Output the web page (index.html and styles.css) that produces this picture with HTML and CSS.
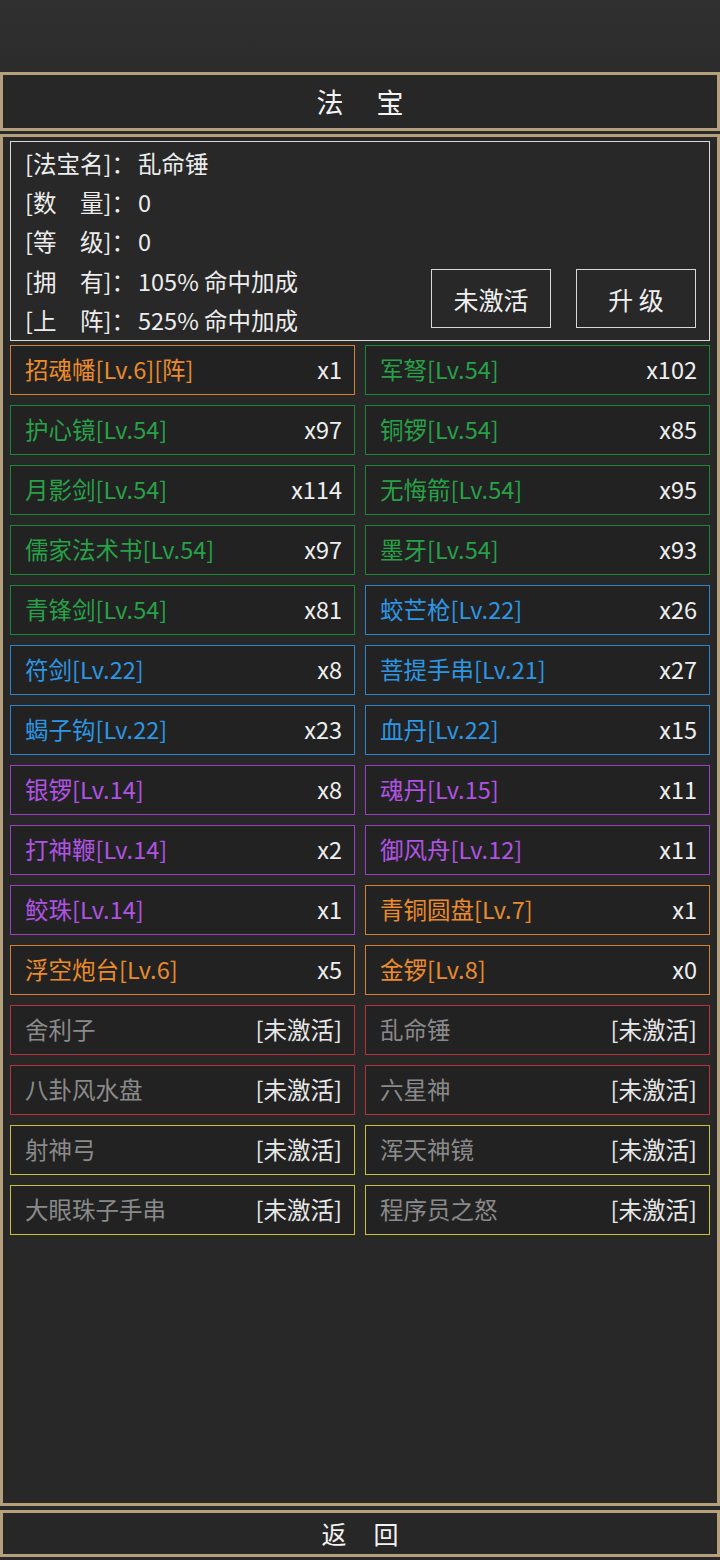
FILE: index.html
```html
<!DOCTYPE html>
<html lang="zh">
<head>
<meta charset="utf-8">
<title>法宝</title>
<link rel="stylesheet" href="styles.css">
</head>
<body>
<div class="screen">
  <div class="topbar"></div>
  <div class="header"><span class="title">法宝</span></div>
  <div class="panel">
    <div class="info">
      <div class="lines">
        <div class="line"><span class="key">[法宝名]：</span>乱命锤</div>
        <div class="line"><span class="key">[数　量]：</span>0</div>
        <div class="line"><span class="key">[等　级]：</span>0</div>
        <div class="line"><span class="key">[拥　有]：</span>105% 命中加成</div>
        <div class="line"><span class="key">[上　阵]：</span>525% 命中加成</div>
      </div>
      <div class="actions">
        <div class="btn">未激活</div>
        <div class="btn">升 级</div>
      </div>
    </div>
    <div class="grid">
      <div class="item orange"><span class="name">招魂幡[Lv.6][阵]</span><span class="count">x1</span></div>
      <div class="item green"><span class="name">军弩[Lv.54]</span><span class="count">x102</span></div>
      <div class="item green"><span class="name">护心镜[Lv.54]</span><span class="count">x97</span></div>
      <div class="item green"><span class="name">铜锣[Lv.54]</span><span class="count">x85</span></div>
      <div class="item green"><span class="name">月影剑[Lv.54]</span><span class="count">x114</span></div>
      <div class="item green"><span class="name">无悔箭[Lv.54]</span><span class="count">x95</span></div>
      <div class="item green"><span class="name">儒家法术书[Lv.54]</span><span class="count">x97</span></div>
      <div class="item green"><span class="name">墨牙[Lv.54]</span><span class="count">x93</span></div>
      <div class="item green"><span class="name">青锋剑[Lv.54]</span><span class="count">x81</span></div>
      <div class="item blue"><span class="name">蛟芒枪[Lv.22]</span><span class="count">x26</span></div>
      <div class="item blue"><span class="name">符剑[Lv.22]</span><span class="count">x8</span></div>
      <div class="item blue"><span class="name">菩提手串[Lv.21]</span><span class="count">x27</span></div>
      <div class="item blue"><span class="name">蝎子钩[Lv.22]</span><span class="count">x23</span></div>
      <div class="item blue"><span class="name">血丹[Lv.22]</span><span class="count">x15</span></div>
      <div class="item purple"><span class="name">银锣[Lv.14]</span><span class="count">x8</span></div>
      <div class="item purple"><span class="name">魂丹[Lv.15]</span><span class="count">x11</span></div>
      <div class="item purple"><span class="name">打神鞭[Lv.14]</span><span class="count">x2</span></div>
      <div class="item purple"><span class="name">御风舟[Lv.12]</span><span class="count">x11</span></div>
      <div class="item purple"><span class="name">鲛珠[Lv.14]</span><span class="count">x1</span></div>
      <div class="item orange"><span class="name">青铜圆盘[Lv.7]</span><span class="count">x1</span></div>
      <div class="item orange"><span class="name">浮空炮台[Lv.6]</span><span class="count">x5</span></div>
      <div class="item orange"><span class="name">金锣[Lv.8]</span><span class="count">x0</span></div>
      <div class="item red locked"><span class="name">舍利子</span><span class="count">[未激活]</span></div>
      <div class="item red locked"><span class="name">乱命锤</span><span class="count">[未激活]</span></div>
      <div class="item red locked"><span class="name">八卦风水盘</span><span class="count">[未激活]</span></div>
      <div class="item red locked"><span class="name">六星神</span><span class="count">[未激活]</span></div>
      <div class="item yellow locked"><span class="name">射神弓</span><span class="count">[未激活]</span></div>
      <div class="item yellow locked"><span class="name">浑天神镜</span><span class="count">[未激活]</span></div>
      <div class="item yellow locked"><span class="name">大眼珠子手串</span><span class="count">[未激活]</span></div>
      <div class="item yellow locked"><span class="name">程序员之怒</span><span class="count">[未激活]</span></div>
    </div>
  </div>
  <div class="footer"><span class="back">返回</span></div>
</div>
</body>
</html>
```

FILE: styles.css
```css
* {
  box-sizing: border-box;
}

html, body {
  margin: 0;
  padding: 0;
  background: #2a2a2a;
}

body {
  font-family: "Noto Sans CJK SC", "Noto Sans", sans-serif;
  color: #ececec;
}

.screen {
  width: 720px;
  height: 1560px;
  display: flex;
  flex-direction: column;
  background: linear-gradient(180deg, #303030 0%, #2a2a2a 6%, #2b2b2b 50%, #2a2a2a 100%);
}

.topbar {
  height: 72px;
  flex: none;
}

.header {
  height: 59px;
  flex: none;
  border: 3px solid #b4a17c;
  background: #272727;
  display: flex;
  align-items: center;
  justify-content: center;
}

.title {
  font-size: 27px;
  line-height: 1;
  letter-spacing: 33px;
  text-indent: 33px;
  color: #f2f2f2;
}

.panel {
  margin-top: 3px;
  height: 1372px;
  flex: none;
  border: 3px solid #b4a17c;
  background: #282828;
  padding: 4px 7px 0 7px;
}

.info {
  height: 200px;
  border: 1.5px solid #d8d8d8;
  display: flex;
  justify-content: space-between;
  padding: 2px 13px 12px 14px;
}

.lines {
  display: flex;
  flex-direction: column;
}

.line {
  font-size: 23.5px;
  line-height: 39.2px;
  height: 39.2px;
  white-space: nowrap;
  color: #ededed;
}

.key {
  display: inline-block;
  width: 113px;
}

.actions {
  align-self: flex-end;
  display: flex;
  gap: 25px;
}

.btn {
  width: 120px;
  height: 59px;
  border: 1.5px solid #d8d8d8;
  display: flex;
  align-items: center;
  justify-content: center;
  font-size: 25px;
  color: #f0f0f0;
}

.grid {
  margin-top: 4px;
  display: grid;
  grid-template-columns: 345px 345px;
  column-gap: 10px;
  row-gap: 10px;
  grid-auto-rows: 50px;
}

.item {
  border: 1.5px solid #888;
  background: rgba(22, 22, 22, 0.35);
  display: flex;
  align-items: center;
  justify-content: space-between;
  padding: 0 12px 0 14px;
  font-size: 23.5px;
  line-height: 1;
  white-space: nowrap;
}

.count {
  color: #efefef;
}

.orange { border-color: #d4802f; }
.orange .name { color: #ea8b2d; }

.green { border-color: #1b8638; }
.green .name { color: #27a147; }

.blue { border-color: #2a86cc; }
.blue .name { color: #2d96e2; }

.purple { border-color: #9a3fc6; }
.purple .name { color: #b153e2; }

.red { border-color: #b8323c; }
.yellow { border-color: #c9c236; }

.locked .name { color: #8a8a8a; }
.locked .count { color: #e8e8e8; }

.footer {
  margin-top: 4px;
  height: 47px;
  flex: none;
  border: 3px solid #b4a17c;
  background: #272727;
  display: flex;
  align-items: center;
  justify-content: center;
}

.back {
  font-size: 25px;
  line-height: 1;
  letter-spacing: 27px;
  text-indent: 27px;
  color: #f2f2f2;
}
```
